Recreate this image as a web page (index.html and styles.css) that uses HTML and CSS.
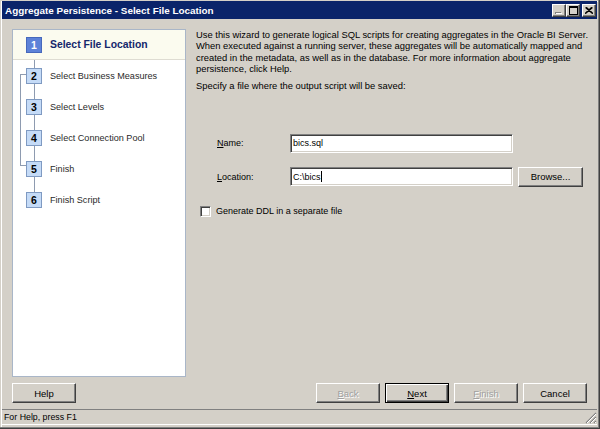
FILE: index.html
```html
<!DOCTYPE html>
<html>
<head>
<meta charset="utf-8">
<title>Aggregate Persistence - Select File Location</title>
<link rel="stylesheet" href="styles.css">
</head>
<body>
<div class="window">
  <div class="titlebar">
    <span class="title">Aggregate Persistence - Select File Location</span>
    <div class="tb-buttons">
      <span class="tb-btn disabled"><svg width="8" height="7" viewBox="0 0 8 7"><rect x="0" y="5" width="6" height="2" fill="#808080"/><rect x="1" y="6" width="6" height="1" fill="#fff"/></svg></span>
      <span class="tb-btn"><svg width="9" height="9" viewBox="0 0 9 9"><rect x="0.5" y="0.5" width="8" height="8" fill="none" stroke="#000"/><rect x="0" y="0" width="9" height="2" fill="#000"/></svg></span>
      <span class="tb-btn close"><svg width="8" height="7" viewBox="0 0 8 7"><path d="M0.5 0.5 L7.5 6.5 M7.5 0.5 L0.5 6.5 M1.5 0.5 L8 6.5 M6.5 0.5 L0 6.5" stroke="#000" stroke-width="1.1" fill="none"/></svg></span>
    </div>
  </div>

  <div class="main">
    <div class="steps">
      <div class="vline"></div>
      <div class="branch"></div>
      <div class="step active"><span class="num">1</span><span class="label">Select File Location</span></div>
      <div class="step"><span class="num">2</span><span class="label">Select Business Measures</span></div>
      <div class="step"><span class="num">3</span><span class="label">Select Levels</span></div>
      <div class="step"><span class="num">4</span><span class="label">Select Connection Pool</span></div>
      <div class="step"><span class="num">5</span><span class="label">Finish</span></div>
      <div class="step"><span class="num">6</span><span class="label">Finish Script</span></div>
    </div>

    <div class="content">
      <p class="intro">Use this wizard to generate logical SQL scripts for creating aggregates in the Oracle BI Server.<br>When executed against a running server, these aggregates will be automatically mapped and<br>created in the metadata, as well as in the database. For more information about aggregate<br>persistence, click Help.</p>
      <p class="specify">Specify a file where the output script will be saved:</p>

      <div class="form">
        <label class="lbl"><u>N</u>ame:</label>
        <div class="field">bics.sql</div>
        <span></span>
        <label class="lbl"><u>L</u>ocation:</label>
        <div class="field">C:\bics<span class="caret"></span></div>
        <button class="btn">Browse...</button>
      </div>

      <div class="check"><span class="box"></span><span>Generate DDL in a separate file</span></div>
    </div>
  </div>

  <div class="footer">
    <button class="btn">Help</button>
    <div class="nav">
      <button class="btn disabled"><u>B</u>ack</button>
      <button class="btn default"><u>N</u>ext</button>
      <button class="btn disabled"><u>F</u>inish</button>
      <button class="btn">Cancel</button>
    </div>
  </div>

  <div class="status">
    <span class="status-text">For Help, press F1</span>
    <svg class="grip" width="12" height="12" viewBox="0 0 12 12">
      <path d="M11 1 L1 11 M11 5 L5 11 M11 9 L9 11" stroke="#808080" stroke-width="1.2"/>
      <path d="M11 2 L2 11 M11 6 L6 11 M11 10 L10 11" stroke="#fff" stroke-width="1"/>
    </svg>
  </div>
</div>
</body>
</html>
```

FILE: styles.css
```css
* { box-sizing: border-box; }

html, body { margin: 0; padding: 0; }

body {
  width: 600px;
  height: 429px;
  overflow: hidden;
  background: #d4d0c8;
  font-family: "Liberation Sans", Arial, sans-serif;
  font-size: 9px;
  color: #000;
}

.window {
  width: 600px;
  height: 429px;
  display: flex;
  flex-direction: column;
  padding: 1px 3px 4px 2px;
  background: #d4d0c8;
  box-shadow: inset -1px -1px #404040, inset -2px -2px #808080, inset 1px 1px #d4d0c8, inset 2px 2px #ffffff;
}

/* Title bar */
.titlebar {
  height: 18px;
  flex: none;
  background: #0a246a;
  display: flex;
  align-items: center;
  justify-content: space-between;
  padding: 0 1px 0 3px;
}

.title {
  color: #fff;
  font-weight: bold;
  font-size: 9.9px;
}

.tb-buttons { display: flex; }

.tb-btn {
  width: 14px;
  height: 13px;
  background: #d4d0c8;
  border-style: solid;
  border-width: 1px;
  border-color: #fff #404040 #404040 #fff;
  box-shadow: inset -1px -1px #808080;
  display: flex;
  align-items: center;
  justify-content: center;
}

.tb-btn.close { margin-left: 2px; }

/* Main area */
.main {
  display: flex;
  margin-top: 10px;
  padding-left: 10px;
  height: 348px;
  flex: none;
}

.steps {
  position: relative;
  width: 174px;
  height: 348px;
  flex: none;
  background: #fff;
  border: 1px solid #a9b6c8;
}

.vline {
  position: absolute;
  left: 21px;
  top: 20px;
  width: 1px;
  height: 150px;
  background: #8e9bb0;
}

.branch {
  position: absolute;
  left: 7px;
  top: 44px;
  width: 7px;
  height: 92px;
  border: 1px solid #8e9bb0;
  border-right: none;
}

.step {
  position: relative;
  display: flex;
  align-items: center;
  height: 31px;
}

.step.active {
  height: 30px;
  background: #fbfbef;
  border-bottom: 1px solid #dedcd2;
}

.num {
  position: relative;
  z-index: 1;
  width: 16px;
  height: 16px;
  margin-left: 13px;
  display: flex;
  align-items: center;
  justify-content: center;
  font-weight: bold;
  font-size: 10.5px;
  background: #c5dbf7;
  border: 1px solid #7f9ac2;
  color: #000;
}

.active .num {
  background: #5d82d8;
  border-color: #4668bc;
  color: #fff;
}

.label {
  margin-left: 8px;
  font-size: 9.1px;
  color: #2a2a2a;
}

.active .label {
  font-weight: bold;
  font-size: 10.4px;
  color: #14266b;
}

/* Content */
.content {
  margin-left: 10px;
  flex: 1;
}

.intro {
  margin: 0;
  font-size: 9.4px;
  line-height: 11.3px;
}

.specify {
  margin: 5.5px 0 0;
  font-size: 9.4px;
  line-height: 11.3px;
}

.form {
  display: grid;
  grid-template-columns: 68px 223px 65px;
  column-gap: 5px;
  row-gap: 14px;
  align-items: center;
  margin: 43px 0 0 21px;
}

.lbl { font-size: 9px; }

.field {
  height: 19px;
  background: #fff;
  border-style: solid;
  border-width: 1px;
  border-color: #808080 #fff #fff #808080;
  box-shadow: inset 1px 1px #404040, inset -1px -1px #d4d0c8;
  padding: 0 2px;
  display: flex;
  align-items: center;
  font-size: 9px;
}

.caret {
  display: inline-block;
  width: 1px;
  height: 11px;
  background: #000;
  margin-left: 0;
}

.btn {
  height: 20px;
  width: 65px;
  padding: 0;
  background: #d4d0c8;
  font-family: "Liberation Sans", Arial, sans-serif;
  font-size: 9.5px;
  color: #000;
  border-style: solid;
  border-width: 1px;
  border-color: #fff #404040 #404040 #fff;
  box-shadow: inset -1px -1px #808080;
}

.btn.disabled {
  color: #a0a0a0;
  text-shadow: 1px 1px #fff;
}

.btn.default {
  border: 1px solid #000;
  box-shadow: inset 1px 1px #fff, inset -1px -1px #404040, inset -2px -2px #808080;
}

.check {
  display: flex;
  align-items: center;
  gap: 5px;
  margin: 19px 0 0 4px;
}

.box {
  width: 11px;
  height: 11px;
  background: #fff;
  border-style: solid;
  border-width: 1px;
  border-color: #808080 #fff #fff #808080;
  box-shadow: inset 1px 1px #404040, inset -1px -1px #d4d0c8;
}

/* Footer */
.footer {
  display: flex;
  justify-content: space-between;
  margin-top: 6px;
  padding: 0 10px;
  flex: none;
}

.footer .btn { width: 64px; }

.nav {
  display: flex;
  gap: 5px;
}

/* Status bar */
.status {
  margin-top: 6px;
  height: 16px;
  flex: none;
  display: flex;
  align-items: center;
  justify-content: space-between;
  padding: 0 0 0 2px;
  border-top: 1px solid #808080;
  border-bottom: 1px solid #fff;
}

.status-text { font-size: 8.8px; }

.grip { align-self: flex-end; }
```
